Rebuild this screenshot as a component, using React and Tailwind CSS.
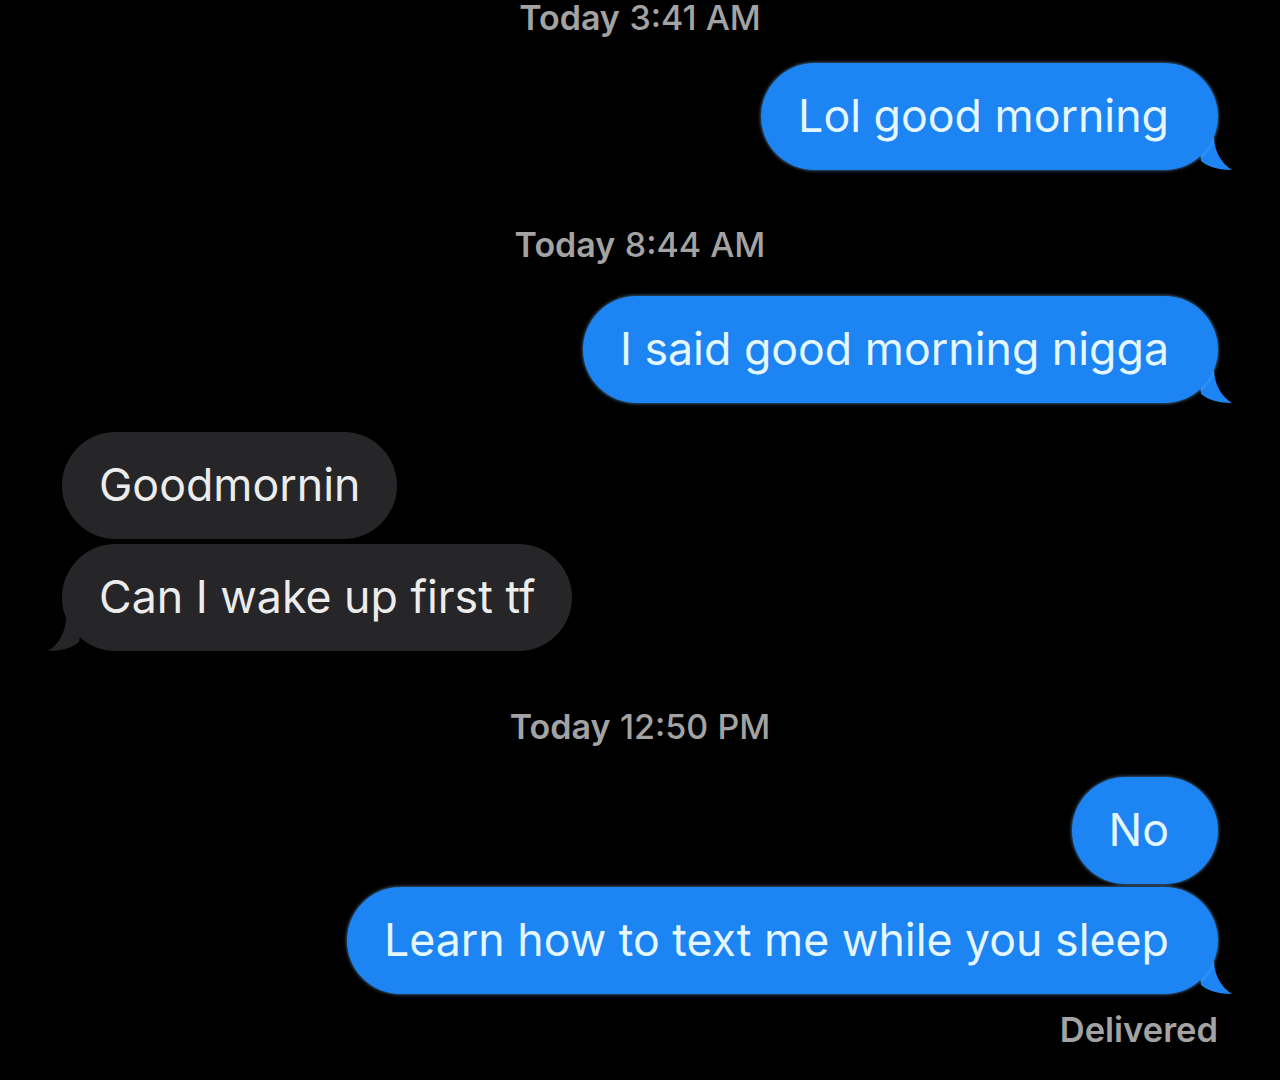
import React from "react";

const font = { fontFamily: "Inter, 'Liberation Sans', Arial, sans-serif" };

function Tail({ side, color }) {
  if (side === "right") {
    return (
      <svg className="absolute right-[-16px] bottom-0" width="36" height="32" viewBox="0 0 36 32">
        <path d="M0 0 L16 0 C17 14 23 25 34 32 C21 32 10 29 3 23 Z" fill={color} />
      </svg>
    );
  }
  return (
    <svg className="absolute left-[-16px] bottom-0" width="36" height="32" viewBox="0 0 36 32">
      <path d="M36 0 L20 0 C19 14 13 25 2 32 C15 32 26 29 33 23 Z" fill={color} />
    </svg>
  );
}

function Blue({ text, tail, mt }) {
  return (
    <div className={`relative self-end ${mt}`}>
      {tail && <Tail side="right" color="#1c84f3" />}
      <div className="relative z-10 h-[107px] flex items-center pl-[37px] pr-[49px] rounded-[54px] bg-[#1c84f3] text-[#e4f6ff] text-[44.7px] leading-none whitespace-nowrap shadow-[0_0_3px_1px_rgba(120,190,255,0.45)]">
        {text}
      </div>
    </div>
  );
}

function Gray({ text, tail, mt }) {
  return (
    <div className={`relative self-start ${mt}`}>
      {tail && <Tail side="left" color="#262628" />}
      <div className="relative z-10 h-[107px] flex items-center pl-[37px] pr-[37px] rounded-[54px] bg-[#262628] text-[#ececec] text-[44.7px] leading-none whitespace-nowrap">
        {text}
      </div>
    </div>
  );
}

function Stamp({ day, time, mt }) {
  return (
    <div className={`self-center h-[30px] leading-[30px] text-[34px] text-[#a3a3a3] ${mt}`}>
      <span className="font-semibold">{day}</span>{" "}
      <span className="font-medium">{time}</span>
    </div>
  );
}

export default function App() {
  return (
    <div style={font} className="w-[1280px] h-[1080px] bg-black overflow-hidden flex flex-col px-[62px]">
      <Stamp day="Today" time="3:41 AM" mt="mt-[3px]" />
      <Blue text="Lol good morning" tail mt="mt-[30px]" />
      <Stamp day="Today" time="8:44 AM" mt="mt-[60px]" />
      <Blue text="I said good morning nigga" tail mt="mt-[36px]" />
      <Gray text="Goodmornin" mt="mt-[29px]" />
      <Gray text="Can I wake up first tf" tail mt="mt-[5px]" />
      <Stamp day="Today" time="12:50 PM" mt="mt-[61px]" />
      <Blue text="No" mt="mt-[35px]" />
      <Blue text="Learn how to text me while you sleep" tail mt="mt-[3px]" />
      <div className="self-end mt-[21px] h-[30px] leading-[30px] text-[34.5px] font-semibold text-[#a3a3a3]">Delivered</div>
    </div>
  );
}
